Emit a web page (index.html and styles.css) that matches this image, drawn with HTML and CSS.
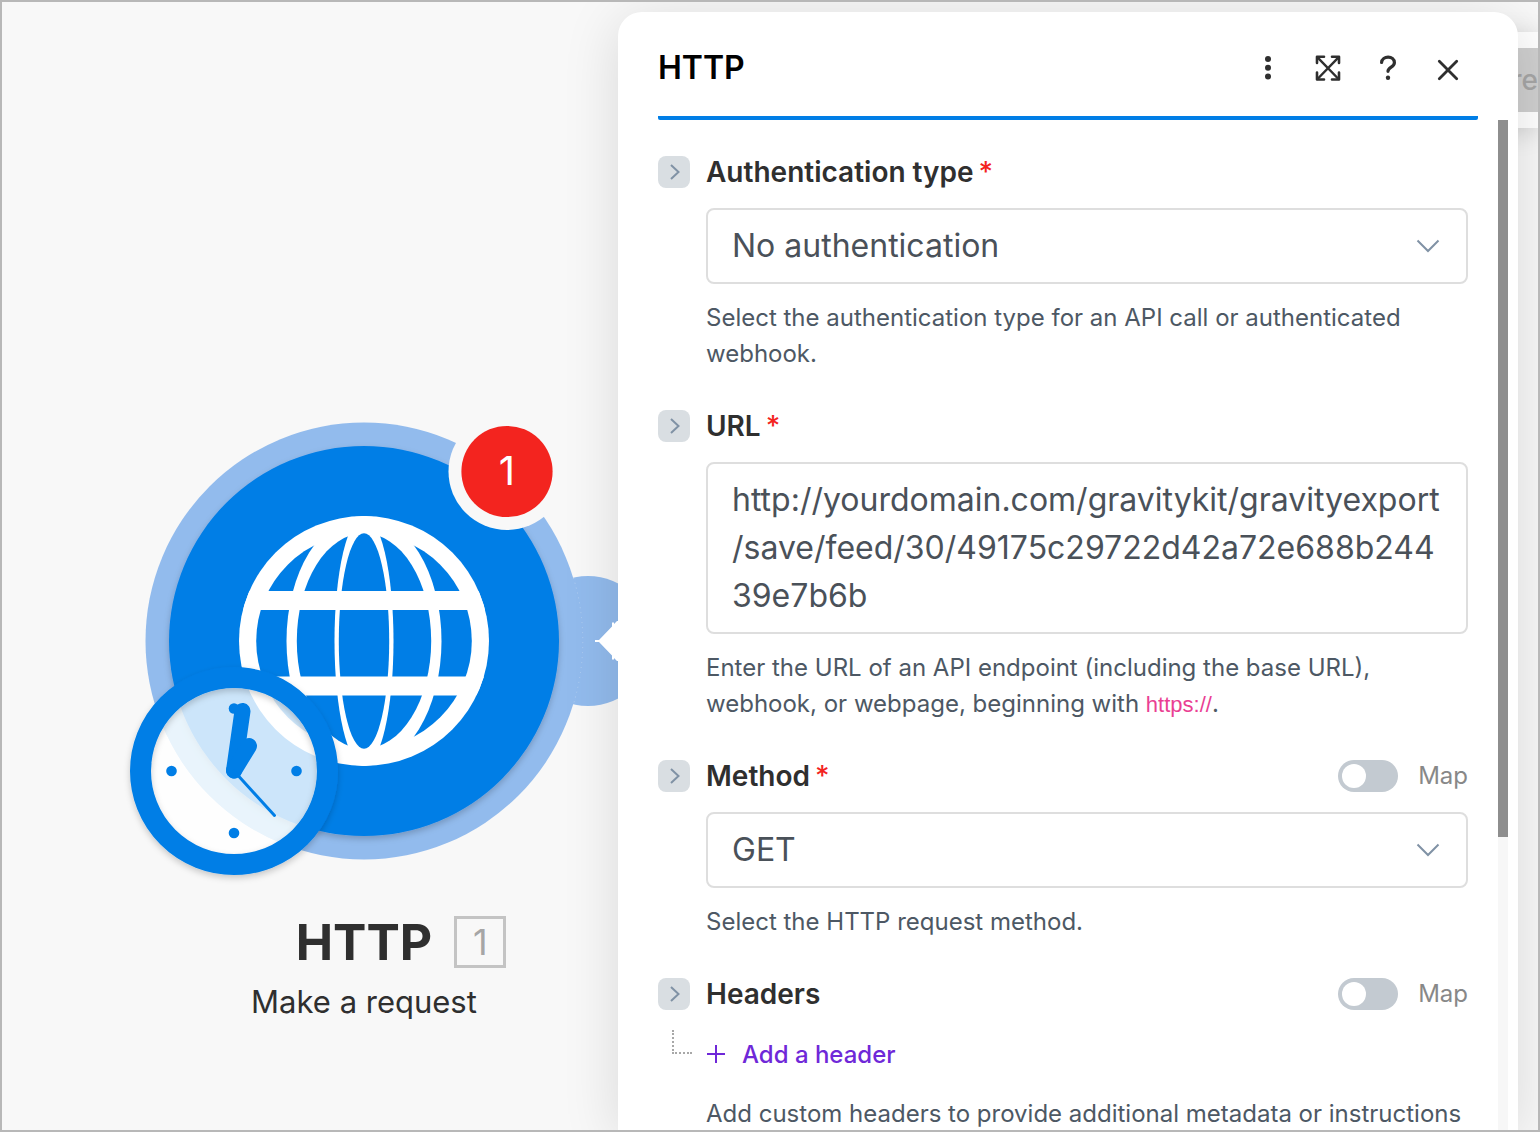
FILE: index.html
```html
<!DOCTYPE html>
<html lang="en">
<head>
<meta charset="utf-8">
<title>HTTP module</title>
<link rel="stylesheet" href="styles.css">
</head>
<body>
<div class="app">
  <main class="canvas">
    <section class="node">
      <svg class="node-art" viewBox="124 416 480 470" aria-hidden="true">
        <defs>
          <clipPath id="globe"><circle cx="364" cy="641" r="125"/></clipPath>
          <clipPath id="face"><circle cx="234" cy="771" r="84"/></clipPath>
          <filter id="drop" x="-10%" y="-10%" width="120%" height="125%">
            <feDropShadow dx="0" dy="3" stdDeviation="3" flood-color="#000" flood-opacity=".2"/>
          </filter>
        </defs>
        <circle cx="588" cy="641" r="65" fill="#92bbed"/>
        <circle cx="364" cy="641" r="218.500" fill="#92bbed"/>
        <path d="M573.500 578A218.500 218.500 0 0 1 573.500 704" fill="none" stroke="#b4d0f2" stroke-dasharray="1 4"/>
        <circle cx="364" cy="641" r="218.500" fill="#8fc9ee" clip-path="url(#face)"/>
        <circle cx="364" cy="641" r="195" fill="#007ee6" filter="url(#drop)"/>
        <circle cx="364" cy="641" r="125" fill="#fff"/>
        <circle cx="364" cy="641" r="107.800" fill="#007ee6"/>
        <g clip-path="url(#globe)">
          <ellipse cx="364" cy="641" rx="77.500" ry="125" fill="#fff"/>
          <ellipse cx="364" cy="641" rx="67.200" ry="107.800" fill="#007ee6"/>
          <ellipse cx="364" cy="641" rx="29.500" ry="125" fill="#fff"/>
          <ellipse cx="364" cy="641" rx="25.200" ry="107.800" fill="#007ee6"/>
          <path d="M239 591h250v19H239zM239 676.500h250v19H239z" fill="#fff"/>
        </g>
        <circle cx="507" cy="471.500" r="58.500" fill="#f8f8f8"/>
        <circle cx="507" cy="471.500" r="45.600" fill="#f3241f"/>
        <text x="507" y="485" text-anchor="middle" class="alert-count">1</text>
        <circle cx="234" cy="771" r="83.500" fill="#fff" fill-opacity=".8"/>
        <g fill="none" stroke="#007ee6" stroke-linecap="round">
          <circle cx="234" cy="771" r="93.500" stroke-width="21" filter="url(#drop)"/>
          <path d="M234 770.500L242.500 711" stroke-width="16"/>
          <path d="M234 770.500L249 746" stroke-width="16"/>
          <path d="M234 771l40.500 44.500" stroke-width="3"/>
        </g>
        <g fill="#007ee6">
          <circle cx="171.500" cy="771" r="5.300"/>
          <circle cx="296.500" cy="771" r="5.300"/>
          <circle cx="234" cy="833" r="5.300"/>
          <circle cx="234" cy="708.500" r="5.300"/>
        </g>
      </svg>
      <h1 class="node-title">HTTP<span class="node-index">1</span></h1>
      <p class="node-action">Make a request</p>
    </section>
  </main>

  <div class="toolbar"><button type="button" class="toolbar-button" disabled>re</button></div>

  <section class="panel" aria-labelledby="panel-title">
    <svg class="panel-arrow" viewBox="0 0 24 44" aria-hidden="true"><path d="M1 21h4L18 7.500V3.500h2V5l3-3h1v40h-1l-3-3v1.500h-2V36.500L5 23H1z" fill="#fff"/></svg>
    <header class="panel-header">
      <h2 class="panel-title" id="panel-title">HTTP</h2>
      <div class="panel-actions">
        <button type="button" class="icon-button" aria-label="More options">
          <svg viewBox="0 0 28 28" fill="#2f2f2f"><circle cx="14" cy="5" r="3"/><circle cx="14" cy="13.800" r="3"/><circle cx="14" cy="22.500" r="3"/></svg>
        </button>
        <button type="button" class="icon-button" aria-label="Expand">
          <svg viewBox="0 0 28 28" fill="none" stroke="#2f2f2f" stroke-width="2.600" stroke-linecap="round" stroke-linejoin="round"><path d="M3 9V2.800h7M18 2.800h7V9M25 18.500v7h-7M10 25.500H3v-7"/><path d="M3.500 3.300l21 21.700M24.500 3.300L3.500 25" stroke-width="2.400"/></svg>
        </button>
        <button type="button" class="icon-button" aria-label="Help">
          <svg viewBox="0 0 28 28" fill="none" stroke="#2f2f2f" stroke-width="3.200" stroke-linecap="round"><path d="M7.600 8.500C8 1.300 20.400 1.300 20.400 8.700C20.400 13.300 14 12.800 14 17.300"/><circle cx="14" cy="23.700" r="2.200" fill="#2f2f2f" stroke="none"/></svg>
        </button>
        <button type="button" class="icon-button" aria-label="Close">
          <svg viewBox="0 0 28 28" fill="none" stroke="#2f2f2f" stroke-width="2.800" stroke-linecap="round"><path d="M5.300 7.300l17.400 17.400M22.700 7.300L5.300 24.700"/></svg>
        </button>
      </div>
    </header>

    <div class="panel-body">
      <form class="fields">
        <div class="field">
          <button type="button" class="toggle-field" aria-label="Expand authentication type"><svg viewBox="0 0 32 32"><path d="M13 9l7.500 7-7.500 7"/></svg></button>
          <div class="field-head"><label for="auth">Authentication type</label><span class="required">*</span></div>
          <div class="field-main">
            <div class="select-wrap">
              <select id="auth" class="control"><option>No authentication</option></select>
              <svg class="caret" viewBox="0 0 24 14"><path d="M1.500 1.500L12 12 22.500 1.500"/></svg>
            </div>
            <p class="help">Select the authentication type for an API call or authenticated webhook.</p>
          </div>
        </div>

        <div class="field">
          <button type="button" class="toggle-field" aria-label="Expand URL"><svg viewBox="0 0 32 32"><path d="M13 9l7.500 7-7.500 7"/></svg></button>
          <div class="field-head"><label for="url">URL</label><span class="required">*</span></div>
          <div class="field-main">
            <textarea id="url" class="control" rows="3" spellcheck="false">http://yourdomain.com/gravitykit/gravityexport
/save/feed/30/49175c29722d42a72e688b244
39e7b6b</textarea>
            <p class="help">Enter the URL of an API endpoint (including the base URL), webhook, or webpage, beginning with <code>https://</code>.</p>
          </div>
        </div>

        <div class="field">
          <button type="button" class="toggle-field" aria-label="Expand method"><svg viewBox="0 0 32 32"><path d="M13 9l7.500 7-7.500 7"/></svg></button>
          <div class="field-head"><label for="method">Method</label><span class="required">*</span>
            <label class="map"><input type="checkbox" class="switch">Map</label>
          </div>
          <div class="field-main">
            <div class="select-wrap">
              <select id="method" class="control"><option>GET</option></select>
              <svg class="caret" viewBox="0 0 24 14"><path d="M1.500 1.500L12 12 22.500 1.500"/></svg>
            </div>
            <p class="help">Select the HTTP request method.</p>
          </div>
        </div>

        <div class="field">
          <button type="button" class="toggle-field" aria-label="Expand headers"><svg viewBox="0 0 32 32"><path d="M13 9l7.500 7-7.500 7"/></svg></button>
          <div class="field-head"><span>Headers</span>
            <label class="map"><input type="checkbox" class="switch">Map</label>
          </div>
          <div class="branch"></div>
          <div class="field-main">
            <button type="button" class="add"><svg viewBox="0 0 20 20"><path d="M10 1v18M1 10h18"/></svg>Add a header</button>
            <p class="help">Add custom headers to provide additional metadata or instructions</p>
          </div>
        </div>
      </form>
      <div class="scrollbar"><div class="scrollbar-thumb"></div></div>
    </div>
  </section>
</div>
</body>
</html>
```
FILE: styles.css
```css
* {
  box-sizing: border-box;
}

body {
  margin: 0;
  font-family: Inter, "Liberation Sans", sans-serif;
  color: #2f2f2f;
}

h1, h2, p {
  margin: 0;
}

button {
  padding: 0;
  border: 0;
  background: none;
  font: inherit;
}

svg {
  display: block;
}

.app {
  position: relative;
  display: flex;
  height: 100vh;
  overflow: hidden;
  border: 2px solid #b8b8b8;
  background: #f8f8f8;
}

/* Canvas */
.canvas {
  position: relative;
  flex: 1;
  min-width: 0;
}

.node {
  position: absolute;
  top: 414px;
  left: 122px;
  width: 480px;
  text-align: center;
}

.node-art {
  width: 480px;
  height: 470px;
  overflow: visible;
}

.alert-count {
  fill: #fff;
  font-size: 40px;
}

.node-title {
  position: relative;
  width: max-content;
  margin: 24px auto 0;
  font-size: 50px;
  font-weight: 700;
  line-height: 64px;
}

.node-index {
  position: absolute;
  top: 6px;
  left: calc(100% + 22px);
  width: 52px;
  height: 52px;
  border: 3px solid #c4c4c4;
  color: #a6a6a6;
  font-size: 36px;
  font-weight: 400;
  line-height: 46px;
}

.node-action {
  margin-top: 8px;
  font-size: 31px;
  line-height: 40px;
}

/* Toolbar behind the panel */
.toolbar {
  position: absolute;
  top: 30px;
  right: 0;
  width: 80px;
  padding: 16px 0;
  background: #fff;
  box-shadow: 0 4px 24px rgba(0, 0, 0, .16);
}

.toolbar-button {
  display: block;
  width: 100%;
  height: 64px;
  background: #cfcfcf;
  color: #a6a6a6;
  font-size: 28px;
  font-weight: 500;
  text-align: right;
}

/* Panel */
.panel {
  position: relative;
  display: flex;
  flex-direction: column;
  width: 900px;
  margin: 10px 20px 0 0;
  border-radius: 24px 24px 0 0;
  background: #fff;
  box-shadow: 0 8px 56px rgba(0, 0, 0, .13);
}

.panel-arrow {
  position: absolute;
  top: 607px;
  left: -24px;
  width: 24px;
  height: 44px;
}

.panel-header {
  display: flex;
  flex: none;
  align-items: center;
  justify-content: space-between;
  height: 108px;
  margin: 0 40px;
  padding-top: 8px;
  border-bottom: 4px solid #007ee6;
  border-radius: 2px;
}

.panel-title {
  color: #000;
  font-size: 32px;
  font-weight: 600;
  line-height: 40px;
}

.panel-actions {
  display: flex;
  gap: 32px;
  padding-right: 16px;
}

.icon-button {
  width: 28px;
  height: 28px;
}

.panel-body {
  display: flex;
  flex: 1;
  min-height: 0;
  overflow: hidden;
  padding-right: 10px;
}

.fields {
  display: flex;
  flex: 1;
  flex-direction: column;
  gap: 38px;
  padding: 36px 30px 0 40px;
}

.scrollbar {
  width: 10px;
  background: #f7f7f7;
}

.scrollbar-thumb {
  height: 71%;
  background: #8e8e8e;
}

.field {
  display: grid;
  flex: none;
  grid-template-columns: 32px 1fr;
  gap: 20px 16px;
}

.toggle-field {
  width: 32px;
  height: 32px;
  border-radius: 8px;
  background: #d9dee2;
}

.toggle-field path,
.caret path {
  fill: none;
  stroke: #8092a5;
  stroke-width: 2;
}

.field-head {
  display: flex;
  align-items: center;
  height: 32px;
  font-size: 28px;
  font-weight: 600;
  line-height: 32px;
}

.required {
  margin-left: 5px;
  color: #f3241f;
  font-weight: 500;
}

.map {
  display: flex;
  align-items: center;
  gap: 20px;
  margin-left: auto;
  color: #888;
  font-size: 24px;
  font-weight: 400;
}

.switch {
  width: 60px;
  height: 32px;
  margin: 0;
  padding: 4px;
  border-radius: 16px;
  appearance: none;
  background: #c3cad1;
}

.switch::before {
  display: block;
  width: 24px;
  height: 24px;
  border-radius: 50%;
  background: #fff;
  content: "";
}

.field-main {
  grid-column: 2;
}

.control {
  display: block;
  width: 100%;
  margin: 0;
  padding: 12px 24px;
  border: 2px solid #dedede;
  border-radius: 8px;
  appearance: none;
  background: #fff;
  color: #4a5159;
  font: 400 32px/48px Inter, "Liberation Sans", sans-serif;
  overflow: hidden;
  resize: none;
}

.select-wrap {
  display: grid;
  align-items: center;
}

.select-wrap > * {
  grid-area: 1 / 1;
}

.caret {
  width: 24px;
  height: 14px;
  margin-right: 28px;
  justify-self: end;
  pointer-events: none;
}

.help {
  margin-top: 16px;
  color: #4d5864;
  font-size: 24px;
  line-height: 36px;
}

.help code {
  color: #ea3f93;
  font-family: "Liberation Sans", sans-serif;
  font-size: 22px;
  line-height: 24px;
}

.branch {
  width: 20px;
  height: 24px;
  margin-left: 14px;
  border: dotted #a8a8a8;
  border-width: 0 0 2px 2px;
}

.field-main:has(.add) {
  grid-column: 2;
}

.add {
  display: flex;
  align-items: center;
  gap: 16px;
  height: 48px;
  color: #6f28d8;
  font-size: 24px;
  font-weight: 500;
}

.add svg {
  width: 20px;
  height: 20px;
  fill: none;
  stroke: #6f28d8;
  stroke-width: 2;
}

.add + .help {
  margin-top: 18px;
}
```
